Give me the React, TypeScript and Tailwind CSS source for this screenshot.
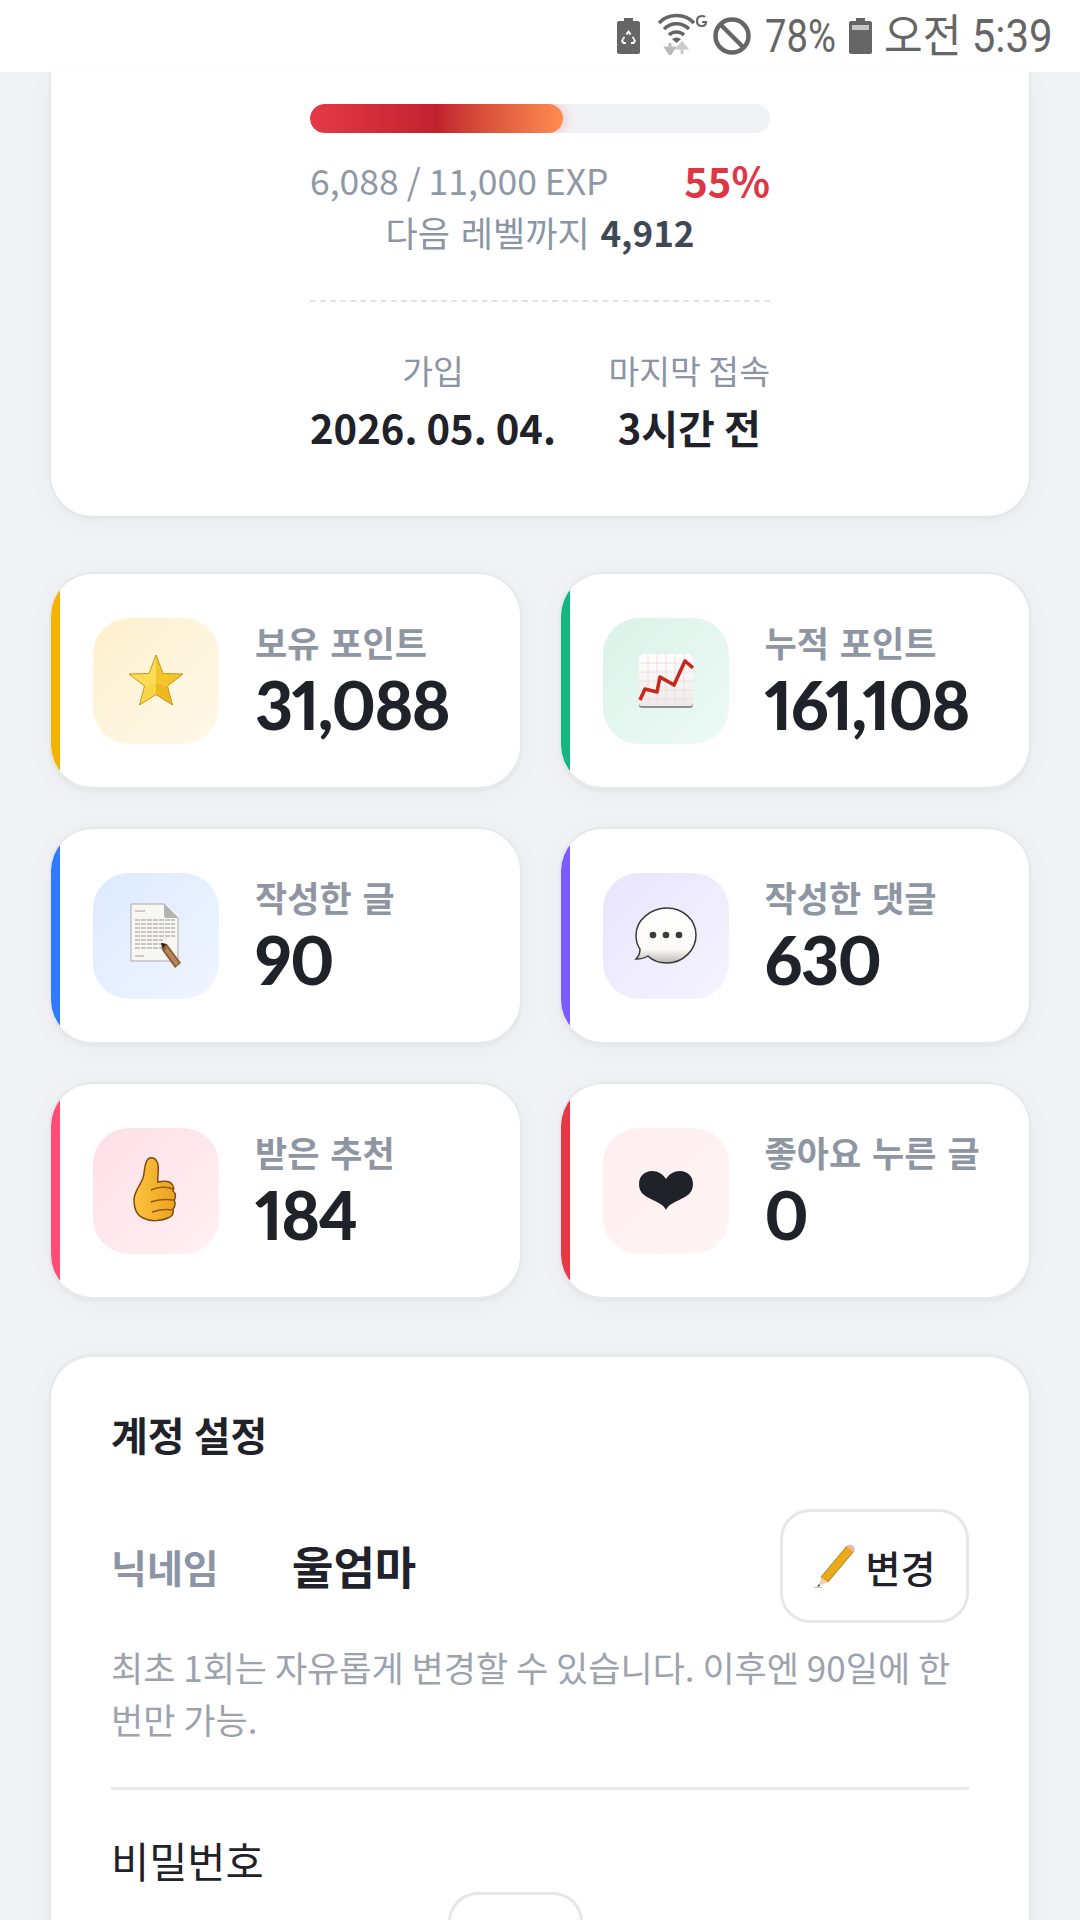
const KR = "font-['Noto_Sans_CJK_KR','Noto_Sans',sans-serif]";

function Star() {
  return (
    <svg width="56" height="54" viewBox="0 0 56 54">
      <polygon points="28,1 21,19.500 1,20 16.500,32 28,28" fill="#fbdc55" />
      <polygon points="28,1 35,19.500 55,20 39.500,32 28,28" fill="#f3c52b" />
      <polygon points="28,28 39.500,32 44.500,51 28,40.500" fill="#eeb81f" />
      <polygon points="28,28 16.500,32 11.500,51 28,40.500" fill="#f9d548" />
      <polygon points="28,1 35,19.500 55,20 39.500,32 44.500,51 28,40.500 11.500,51 16.500,32 1,20 21,19.500" fill="none" stroke="#c8961a" strokeWidth="1" />
    </svg>
  );
}

function Chart() {
  return (
    <svg width="56" height="56" viewBox="0 0 56 56">
      <defs>
        <linearGradient id="cb" x1="0" y1="0" x2="0" y2="1">
          <stop offset="0" stopColor="#ffffff" />
          <stop offset="1" stopColor="#ecebea" />
        </linearGradient>
      </defs>
      <rect x="1" y="1" width="54" height="54" rx="3" fill="#8f8f8f" />
      <rect x="1" y="1" width="54" height="52" rx="3" fill="url(#cb)" />
      <path d="M10 1v52M19 1v52M28 1v52M37 1v52M46 1v52M1 10h54M1 19h54M1 28h54M1 37h54M1 46h54" stroke="#efd8d8" strokeWidth=".8" />
      <path d="M2 47l5-11 12 3 3-15 14 8 11-24 8 7" fill="none" stroke="#c7281e" strokeWidth="3.600" strokeLinejoin="round" />
    </svg>
  );
}

function Doc() {
  const lines = [18, 22, 26, 30, 34, 38, 42, 46];
  return (
    <svg width="54" height="68" viewBox="0 0 54 68">
      <path d="M2 2h33l14 14v43H2z" fill="#f8f7f4" stroke="#a9a9a9" />
      <path d="M35 2l14 14H38c-2 0-3-1-3-3z" fill="#b5b5ad" />
      <path d="M6 9h10M6 54h9" stroke="#888" strokeWidth=".8" />
      {lines.map((y) => (
        <path key={y} d={`M6 ${y}h${y > 36 ? 28 : 40}`} stroke="#8a867f" strokeWidth=".9" strokeDasharray="5 1" />
      ))}
      <path d="M32 41l6 1 14 19-6 5-13-18z" fill="#8d5c34" />
      <path d="M32 41l5 1-3 4z" fill="#222" />
      <path d="M38 45l12 16-3 3-11-15z" fill="#b58657" />
    </svg>
  );
}

function Bubble() {
  return (
    <svg width="64" height="58" viewBox="0 0 64 58">
      <defs>
        <linearGradient id="bb" x1="0" y1="0" x2="0" y2="1">
          <stop offset="0" stopColor="#ffffff" />
          <stop offset=".75" stopColor="#fbfaf8" />
          <stop offset="1" stopColor="#bdb9b2" />
        </linearGradient>
      </defs>
      <path d="M33 1c16 0 29 12 29 27S49 56 33 56c-8 0-14-2-19-7-3 2-8 3-12 3 3-3 4-6 4-10-3-4-4-9-4-14C2 13 17 1 33 1z" fill="url(#bb)" stroke="#3a3a3a" strokeWidth="1.500" />
      <circle cx="19" cy="28" r="3.300" fill="#3b3b3b" />
      <circle cx="32" cy="28" r="3.300" fill="#3b3b3b" />
      <circle cx="45" cy="28" r="3.300" fill="#3b3b3b" />
    </svg>
  );
}

function Thumb() {
  return (
    <svg width="46" height="70" viewBox="0 0 46 70">
      <defs>
        <linearGradient id="th" x1="0" y1="0" x2="1" y2="0">
          <stop offset="0" stopColor="#fcc340" />
          <stop offset="1" stopColor="#eca21d" />
        </linearGradient>
      </defs>
      <path d="M15 3c5-3 9 0 10 6 1 7-1 13 0 17 5-1 11-1 13 1 3 3 3 6 2 8 3 2 3 7 1 9 2 3 1 7-1 9 1 4-1 8-5 9-7 3-17 4-25 0C3 59 1 52 1 44c0-8 6-14 9-22 2-6 1-15 5-19z" fill="url(#th)" stroke="#7a4d12" strokeWidth="1.500" />
      <path d="M18 34c6-3 16-4 22-1M18 46c7-3 15-3 23-2M19 56c7-2 14-3 20-2" fill="none" stroke="#8d5a15" strokeWidth="1.500" />
    </svg>
  );
}

function Heart() {
  return (
    <svg width="54" height="40" viewBox="0 0 54 40">
      <path d="M27 39c-2-5-9-8-15-11C5 25 0 21 0 13 0 5 6 0 13 0c6 0 11 3 14 8 3-5 8-8 14-8 7 0 13 5 13 13 0 8-5 12-12 15-6 3-13 6-15 11z" fill="#1f2229" />
    </svg>
  );
}

function Pencil() {
  return (
    <svg width="42" height="44" viewBox="0 0 42 44">
      <path d="M33 2l7 5L14 38l-7-5z" fill="#eba91c" stroke="#9a6a0c" strokeWidth=".8" />
      <path d="M33 2c2-2 4-1 6 0s2 3 1 5l-1 1-6-5z" fill="#eeb4a8" />
      <path d="M7 33l7 5-9 4z" fill="#edd3ad" />
      <path d="M5 40l-2 3 3-1z" fill="#333" />
      <path d="M0 43.500h8" stroke="#c9b5b5" strokeWidth=".8" />
    </svg>
  );
}

function StatusBar() {
  return (
    <div className={`h-[72px] bg-white flex items-center justify-end pr-[28px] pb-[1px] text-[#666666] ${KR}`}>
      <svg className="mr-[18px]" width="23" height="36" viewBox="0 0 23 36">
        <path d="M7 0h9v3h5c1 0 2 1 2 2v29c0 1-1 2-2 2H2c-1 0-2-1-2-2V5c0-1 1-2 2-2h5z" fill="#666" />
        <path d="M11.500 12l3 4-2 1-1-2-1 2-2-1zM16 18l3 5-2 3h-3v-2h2l1-2-2-2zM7 18l-3 5 2 3h3v-2H7l-1-2 2-2z" fill="#fff" />
      </svg>
      <svg width="50" height="42" viewBox="0 0 50 42" className="mr-[5px] mb-[4px]">
        <path d="M1 10C10 0 27 0 36 10M6 16c7-7 18-7 25 0M11 22c4-4 11-4 15 0" fill="none" stroke="#666" strokeWidth="3.500" />
        <path d="M14 26c3-2 6-2 9 0l-4.500 4z" fill="#666" />
        <path d="M12 30v8M8 35l4 6 4-6z" stroke="#bbb" strokeWidth="3" fill="#bbb" />
        <path d="M24 41v-9M20 35l4-5 4 5z" stroke="#ccc" strokeWidth="3" fill="#ccc" />
        <path d="M47 4c-1-1-2-1-3-1-3 0-5 2-5 5s2 5 5 5c2 0 4-1 4-4h-4" fill="none" stroke="#666" strokeWidth="2.200" />
      </svg>
      <svg width="38" height="38" viewBox="0 0 38 38" className="mr-[14px]">
        <circle cx="19" cy="19" r="16.500" fill="none" stroke="#666" strokeWidth="4.500" />
        <path d="M7 7l24 24" stroke="#666" strokeWidth="4.500" />
      </svg>
      <span className="w-[68px] text-[46px] leading-none font-['Roboto'] origin-left scale-x-[0.83] whitespace-nowrap mr-[16px]">78%</span>
      <svg width="23" height="36" viewBox="0 0 23 36" className="mr-[12px]">
        <path d="M7 0h9v3h5c1 0 2 1 2 2v29c0 1-1 2-2 2H2c-1 0-2-1-2-2V5c0-1 1-2 2-2h5z" fill="#666" />
        <rect x="3" y="7" width="17" height="5" fill="#c4c4c4" />
      </svg>
      <span className="w-[168px] text-[46px] leading-none origin-left scale-x-[0.913] whitespace-nowrap font-['Roboto','Noto_Sans_CJK_KR',sans-serif]">오전 5:39</span>
    </div>
  );
}

function ProfileCard() {
  return (
    <div className="bg-white rounded-b-[44px] border-x-2 border-b-[3px] border-[#e6e8ec] pt-[32px] pb-[59px] flex justify-center shadow-[0_4px_22px_rgba(0,0,0,0.04)]">
      <div className="w-[460px]">
        <div className="h-[29px] rounded-full bg-[#f1f2f5] overflow-hidden">
          <div className="h-full w-[55%] rounded-full bg-gradient-to-r from-[#e63946] via-[#c1212f] to-[#ff8c50] shadow-[0_0_14px_rgba(230,57,70,0.35)]" />
        </div>
        <div className="flex justify-between items-center mt-[20px] h-[54px]">
          <span className="text-[35.500px] text-[#8f98a7] leading-none font-normal">6,088 / 11,000 EXP</span>
          <span className="text-[40px] text-[#df3645] font-bold leading-none">55%</span>
        </div>
        <div className="text-center text-[35px] leading-[48px] text-[#8b95a5] font-normal [word-spacing:3px] mt-[1px]">
          다음 레벨까지 <b className="text-[#3f4857] font-bold">4,912</b>
        </div>
        <div className="border-t-2 border-dashed border-[#e0e2e6] mt-[44px]" />
        <div className="flex justify-between mt-[44px]">
          <div className="text-center">
            <div className="text-[33.500px] leading-[48px] text-[#8b95a5] font-normal">가입</div>
            <div className="text-[40px] leading-[60px] font-bold text-[#1f2229] mt-[3px]">2026. 05. 04.</div>
          </div>
          <div className="text-center">
            <div className="text-[33.500px] leading-[48px] text-[#8b95a5] font-normal">마지막 접속</div>
            <div className="text-[40px] leading-[60px] font-bold text-[#1f2229] mt-[3px]">3시간 전</div>
          </div>
        </div>
      </div>
    </div>
  );
}

function StatCard({ accent, tint, label, value, icon }: { accent: string; tint: string; label: string; value: string; icon: React.ReactNode }) {
  return (
    <div className="h-[217px] flex items-center bg-white rounded-[44px] border-2 border-[#e6e8ec] overflow-hidden shadow-[0_3px_0_#e7e8eb,0_4px_22px_rgba(0,0,0,0.04)]">
      <div className={`w-[9px] self-stretch shrink-0 ${accent}`} />
      <div className={`ml-[33px] w-[126px] h-[126px] shrink-0 rounded-[36px] flex items-center justify-center ${tint}`}>{icon}</div>
      <div className="ml-[36px] flex flex-col pb-[4px]">
        <div className="text-[35px] leading-[46px] font-bold text-[#8f96a3] whitespace-nowrap [word-spacing:3px]">{label}</div>
        <div className="font-['Lato'] proportional-nums text-[66px] leading-[68px] font-black tracking-[-1.500px] mt-[6px] text-[#1f2229]">{value}</div>
      </div>
    </div>
  );
}

function Settings() {
  return (
    <div className="mt-[55px] bg-white rounded-t-[44px] border-x-2 border-t-[3px] border-[#e6e8ec] px-[60px] pt-[50px] h-[600px] shadow-[0_4px_22px_rgba(0,0,0,0.04)]">
      <div className="text-[40px] leading-[54px] font-bold text-[#1f2229]">계정 설정</div>
      <div className="flex items-center mt-[48px]">
        <span className="text-[39px] font-bold text-[#8b95a5] w-[181px]">닉네임</span>
        <span className="text-[45px] font-bold text-[#1f2229]">울엄마</span>
        <button className="ml-auto w-[189px] h-[114px] rounded-[30px] border-[3px] border-[#e5e7eb] bg-white flex items-center justify-center gap-[10px] text-[38px] font-medium text-[#1f2229]">
          <Pencil />
          변경
        </button>
      </div>
      <p className="mt-[18px] text-[35px] leading-[52px] font-normal text-[#9ca3af]">
        최초 1회는 자유롭게 변경할 수 있습니다. 이후엔 90일에 한 번만 가능.
      </p>
      <div className="mt-[42px] h-[3px] bg-[#e8e9ec]" />
      <div className="mt-[42px] text-[41.500px] leading-[56px] text-[#1f2229]">비밀번호</div>
      <div className="ml-[337px] mt-[4px] w-[135px] h-[114px] rounded-[30px] border-[3px] border-[#e5e7eb] bg-white" />
    </div>
  );
}

export default function App() {
  return (
    <div className={`w-[1080px] h-[1920px] overflow-hidden bg-[#f1f2f5] ${KR}`}>
      <StatusBar />
      <div className="px-[49px]">
        <ProfileCard />
        <div className="grid grid-cols-2 gap-x-[37px] gap-y-[38px] mt-[53px]">
          <StatCard accent="bg-[#f5b301]" tint="bg-gradient-to-br from-[#fdf0cd] to-[#fff9ea]" label="보유 포인트" value="31,088" icon={<Star />} />
          <StatCard accent="bg-[#14b57f]" tint="bg-gradient-to-br from-[#d9f2e8] to-[#eefaf6]" label="누적 포인트" value="161,108" icon={<Chart />} />
          <StatCard accent="bg-[#2f7bff]" tint="bg-gradient-to-br from-[#dde9fe] to-[#f0f6ff]" label="작성한 글" value="90" icon={<Doc />} />
          <StatCard accent="bg-[#7a5cff]" tint="bg-gradient-to-br from-[#e8e4fd] to-[#f6f4ff]" label="작성한 댓글" value="630" icon={<Bubble />} />
          <StatCard accent="bg-[#ff4d78]" tint="bg-gradient-to-br from-[#fddfe6] to-[#fff0f4]" label="받은 추천" value="184" icon={<Thumb />} />
          <StatCard accent="bg-[#e63946]" tint="bg-gradient-to-br from-[#ffeeef] to-[#fff5f5]" label="좋아요 누른 글" value="0" icon={<Heart />} />
        </div>
        <Settings />
      </div>
    </div>
  );
}
